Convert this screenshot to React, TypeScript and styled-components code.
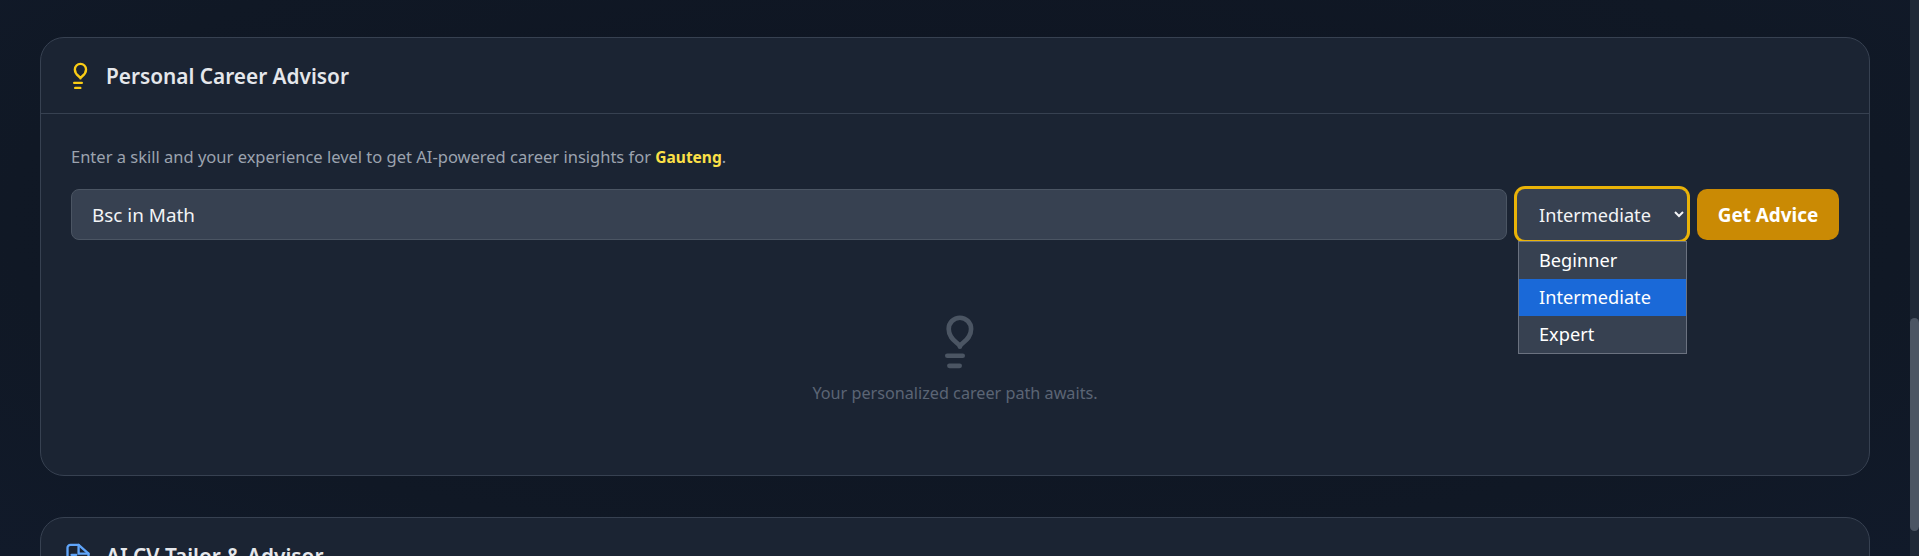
import React from "react";
import styled, { createGlobalStyle } from "styled-components";

const GlobalStyle = createGlobalStyle`
  html, body {
    margin: 0;
    height: 100%;
    overflow: hidden;
    background: #0f1623;
    font-family: "Noto Sans", "Open Sans", sans-serif;
  }
  * { box-sizing: border-box; }
`;

const Page = styled.div`
  display: flex;
  height: 556px;
  overflow: hidden;
`;

const Main = styled.main`
  flex: 1;
  min-width: 0;
  display: flex;
  flex-direction: column;
  gap: 41px;
  padding: 37px 40px 0;
  background: radial-gradient(ellipse at 50% 40%, #0e1421 0%, #101825 70%, #111a2a 100%);
`;

const Card = styled.section<{ $height: number }>`
  flex: 0 0 ${(p) => p.$height}px;
  background: #1b2433;
  border: 1px solid #374151;
  border-radius: 24px;
`;

const CardHeader = styled.header`
  display: flex;
  align-items: center;
  gap: 14px;
  height: 76px;
  padding: 0 23px;
  border-bottom: 1px solid #374151;
`;

const CardTitle = styled.h2`
  margin: 0;
  font-size: 20.8px;
  font-weight: 600;
  color: #e5e7eb;
`;

const Body = styled.div`
  padding: 31px 30px 30px;
  position: relative;
`;

const Intro = styled.p`
  margin: 0 0 20px;
  font-size: 16.5px;
  line-height: 24px;
  color: #9ca3af;
`;

const Highlight = styled.strong`
  color: #fde047;
  font-size: 15.5px;
  font-weight: 700;
`;

const FormRow = styled.div`
  display: flex;
  gap: 10px;
  height: 51px;
`;

const SkillInput = styled.input`
  flex: 1;
  min-width: 0;
  height: 100%;
  padding: 0 20px;
  background: #374151;
  border: 1px solid #4b5563;
  border-radius: 8px;
  color: #f3f4f6;
  font: 400 18.9px "Noto Sans", sans-serif;
  outline: none;
`;

const LevelWrap = styled.div`
  position: relative;
  flex: 0 0 170px;
`;

const LevelSelect = styled.select`
  width: 100%;
  height: 100%;
  padding: 0 10px 0 18px;
  background: #374151;
  border: none;
  border-radius: 8px;
  box-shadow: 0 0 0 3px #eab308;
  color: #f3f4f6;
  font: 400 18.2px "Noto Sans", sans-serif;
  outline: none;
`;

const OptionList = styled.ul`
  position: absolute;
  top: 100%;
  left: 1px;
  right: 0;
  margin: 1px 0 0;
  padding: 0;
  list-style: none;
  background: #374151;
  border: 1px solid #6b7280;
`;

const OptionItem = styled.li<{ $active?: boolean }>`
  height: 37px;
  padding-left: 20px;
  line-height: 37px;
  font-size: 18.2px;
  color: #fff;
  background: ${(p) => (p.$active ? "#1a69d8" : "transparent")};
`;

const AdviceButton = styled.button`
  flex: 0 0 142px;
  border: none;
  border-radius: 10px;
  background: #ca8a04;
  color: #fff;
  font: 700 18.9px "Noto Sans", sans-serif;
`;

const EmptyState = styled.div`
  display: flex;
  flex-direction: column;
  align-items: center;
  margin-top: 74px;
  color: #4b5563;
`;

const EmptyText = styled.p`
  margin: 11px 0 0;
  font-size: 16.2px;
  line-height: 24px;
  color: #5b6575;
`;

const Scrollbar = styled.div`
  flex: 0 0 9px;
  background: #1f2937;
  padding-top: 318px;
`;

const ScrollThumb = styled.div`
  height: 213px;
  background: #4b5563;
  border-radius: 5px;
`;

const LightBulb = ({ size, color }: { size: number; color: string }) => (
  <svg width={size} height={size} viewBox="0 0 24 24" fill="none" stroke={color} strokeWidth="2" strokeLinecap="round" strokeLinejoin="round">
    <path d="M14.100 14C13.800 12.300 9.300 11.200 9.300 6.400a4.800 4.800 0 0 1 9.600 0C18.900 11.200 14.400 12.300 14.100 14" />
    <path d="M8.700 17.900h6.600" />
    <path d="M9.600 22.200h4.400" />
  </svg>
);

const FileIcon = () => (
  <svg width={28} height={28} viewBox="0 0 24 24" fill="none" stroke="#60a5fa" strokeWidth="2" strokeLinecap="round" strokeLinejoin="round">
    <path d="M12.500 2.500H5.500a2.500 2.500 0 0 0-2.500 2.500v16a2.500 2.500 0 0 0 2.500 2.500h13a2.500 2.500 0 0 0 2.500-2.500V10z" />
    <path d="M12.500 2.500v7.500H21" />
    <path d="M6.500 11h4" />
  </svg>
);

export default function App() {
  return (
    <Page>
      <GlobalStyle />
      <Main>
        <Card $height={439}>
          <CardHeader>
            <LightBulb size={28} color="#facc15" />
            <CardTitle>Personal Career Advisor</CardTitle>
          </CardHeader>
          <Body>
            <Intro>
              Enter a skill and your experience level to get AI-powered career insights for <Highlight>Gauteng</Highlight>.
            </Intro>
            <FormRow>
              <SkillInput defaultValue="Bsc in Math" />
              <LevelWrap>
                <LevelSelect defaultValue="Intermediate">
                  <option>Beginner</option>
                  <option>Intermediate</option>
                  <option>Expert</option>
                </LevelSelect>
                <OptionList>
                  <OptionItem>Beginner</OptionItem>
                  <OptionItem $active>Intermediate</OptionItem>
                  <OptionItem>Expert</OptionItem>
                </OptionList>
              </LevelWrap>
              <AdviceButton>Get Advice</AdviceButton>
            </FormRow>
            <EmptyState>
              <LightBulb size={56} color="#4b5563" />
              <EmptyText>Your personalized career path awaits.</EmptyText>
            </EmptyState>
          </Body>
        </Card>
        <Card $height={200}>
          <CardHeader>
            <FileIcon />
            <CardTitle>AI CV Tailor &amp; Advisor</CardTitle>
          </CardHeader>
        </Card>
      </Main>
      <Scrollbar>
        <ScrollThumb />
      </Scrollbar>
    </Page>
  );
}
